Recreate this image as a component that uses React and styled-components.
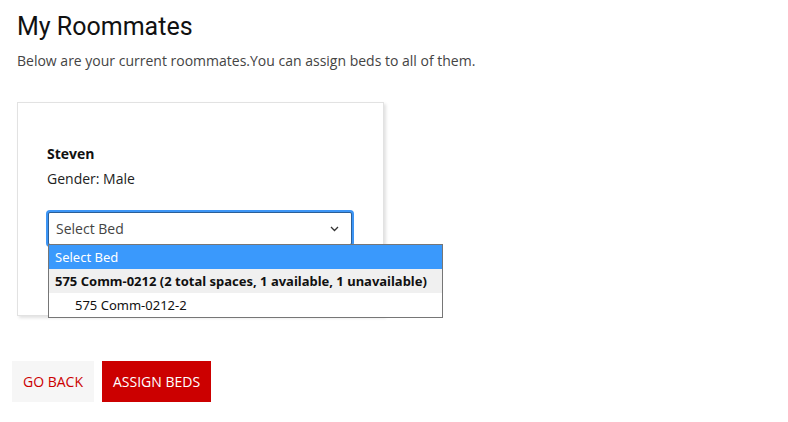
import React from 'react';
import styled, { createGlobalStyle } from 'styled-components';

const GlobalStyle = createGlobalStyle`
  html, body {
    margin: 0;
    padding: 0;
    background: #ffffff;
  }
  body {
    font-family: "Open Sans", "Liberation Sans", sans-serif;
    font-size: 14px;
    color: #333;
  }
`;

const Page = styled.div`
  padding: 12px 0 0 12px;
  width: 788px;
  height: 422px;
  box-sizing: border-box;
`;

const Header = styled.header`
  margin-left: 5px;
`;

const Title = styled.h2`
  margin: 0;
  font-family: Roboto, "Liberation Sans", sans-serif;
  font-weight: 400;
  font-size: 25px;
  line-height: 30px;
  color: #111;
`;

const Lead = styled.p`
  margin: 9px 0 0;
  font-size: 14px;
  line-height: 20px;
  color: #444;
`;

const Card = styled.section`
  margin: 31px 0 0 5px;
  width: 367px;
  height: 214px;
  box-sizing: border-box;
  padding: 41px 29px 0;
  border: 1px solid #e2e2e2;
  box-shadow: 2px 2px 3px rgba(0, 0, 0, 0.12);
  background: #fff;
`;

const Name = styled.div`
  font-weight: 700;
  line-height: 20px;
  color: #111;
`;

const Meta = styled.div`
  margin-top: 5px;
  line-height: 20px;
  color: #222;
`;

const SelectWrap = styled.div`
  position: relative;
  margin: 23px 0 0 1px;
  width: 304px;
`;

const SelectBox = styled.div`
  display: flex;
  align-items: center;
  justify-content: space-between;
  height: 33px;
  box-sizing: border-box;
  padding: 0 12px 0 7px;
  border: 1px solid #2b5f98;
  border-radius: 2px;
  box-shadow: 0 0 0 2px #3d95f5;
  color: #444;
  font-size: 14px;
  background: #fff;
`;

const Menu = styled.ul`
  position: absolute;
  top: 32px;
  left: 0;
  width: 395px;
  box-sizing: border-box;
  margin: 0;
  padding: 0;
  list-style: none;
  border: 1px solid #767676;
  background: #fff;
  font-family: "Noto Sans", "Open Sans", sans-serif;
  font-size: 13px;
  z-index: 2;
`;

const Option = styled.li`
  height: 24px;
  line-height: 24px;
  padding-left: ${p => (p.$indent ? '26px' : '6px')};
  background: ${p => (p.$active ? '#3a99fc' : p.$group ? '#f0f0f0' : '#fff')};
  color: ${p => (p.$active ? '#fff' : '#111')};
  font-weight: ${p => (p.$group ? 700 : 400)};
  white-space: nowrap;
`;

const Actions = styled.div`
  display: flex;
  gap: 8px;
  margin-top: 45px;
`;

const Button = styled.button`
  height: 41px;
  padding: 0 11px;
  border: none;
  border-radius: 0;
  font-family: "Open Sans", "Liberation Sans", sans-serif;
  font-size: 14px;
  text-transform: uppercase;
  cursor: pointer;
  background: ${p => (p.$primary ? '#cc0000' : '#f6f6f6')};
  color: ${p => (p.$primary ? '#fff' : '#cc0000')};
`;

const Chevron = () => (
  <svg width="9" height="6" viewBox="0 0 9 6" fill="none">
    <path d="M1 1l3.5 3.5L8 1" stroke="#333" strokeWidth="1.3" />
  </svg>
);

const App = () => {
  return (
    <Page>
      <GlobalStyle />
      <Header>
        <Title>My Roommates</Title>
        <Lead>Below are your current roommates.You can assign beds to all of them.</Lead>
      </Header>

      <Card>
        <Name>Steven</Name>
        <Meta>Gender: Male</Meta>
        <SelectWrap>
          <SelectBox>
            <span>Select Bed</span>
            <Chevron />
          </SelectBox>
          <Menu>
            <Option $active>Select Bed</Option>
            <Option $group>575 Comm-0212 (2 total spaces, 1 available, 1 unavailable)</Option>
            <Option $indent>575 Comm-0212-2</Option>
          </Menu>
        </SelectWrap>
      </Card>

      <Actions>
        <Button>Go Back</Button>
        <Button $primary>Assign Beds</Button>
      </Actions>
    </Page>
  );
};

export default App;
